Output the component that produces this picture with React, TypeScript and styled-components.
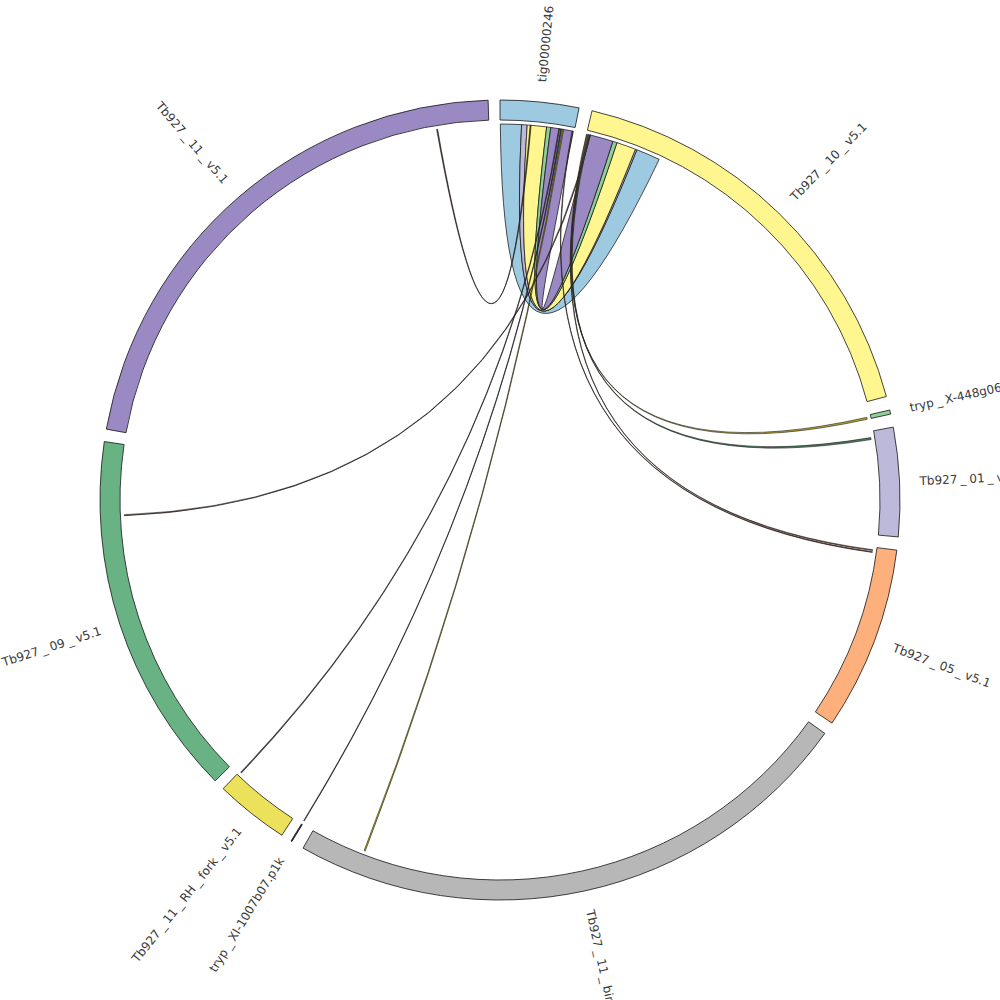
import React from "react";
import styled, { createGlobalStyle } from "styled-components";

const GlobalStyle = createGlobalStyle`
  html, body { margin: 0; padding: 0; background: #ffffff; }
  #root { width: 1000px; height: 1000px; }
`;

const Page = styled.div`
  width: 1000px;
  height: 1000px;
  background: #ffffff;
  overflow: hidden;
`;

const Canvas = styled.svg`
  display: block;
  width: 1000px;
  height: 1000px;
  overflow: hidden;
`;

const SegmentPath = styled.path<{ $fill: string }>`
  fill: ${(p) => p.$fill};
  stroke: #151515;
  stroke-width: 0.8;
  stroke-linejoin: miter;
`;

const RibbonPath = styled.path<{ $fill: string }>`
  fill: ${(p) => p.$fill};
  stroke: #151515;
  stroke-width: 0.75;
  stroke-linejoin: round;
`;

const LinkPath = styled.path<{ $fill: string }>`
  fill: ${(p) => p.$fill};
  stroke: #1a1a1a;
  stroke-width: 0.6;
  stroke-linejoin: round;
`;

const Label = styled.text`
  font-family: "DejaVu Sans", Verdana, sans-serif;
  font-size: 12px;
  fill: #3a3a3a;
`;

const CX = 500;
const CY = 500;
const R_IN = 380;
const R_OUT = 400;
const R_CHORD = 376;
const R_LABEL = 420;

const rad = (a: number) => (a * Math.PI) / 180;
const pt = (a: number, r: number): [number, number] => [
  CX + r * Math.sin(rad(a)),
  CY - r * Math.cos(rad(a)),
];
const f = (p: [number, number]) => `${p[0].toFixed(2)} ${p[1].toFixed(2)}`;

function segmentPath(a0: number, a1: number) {
  const large = a1 - a0 > 180 ? 1 : 0;
  return [
    `M ${f(pt(a0, R_OUT))}`,
    `A ${R_OUT} ${R_OUT} 0 ${large} 1 ${f(pt(a1, R_OUT))}`,
    `L ${f(pt(a1, R_IN))}`,
    `A ${R_IN} ${R_IN} 0 ${large} 0 ${f(pt(a0, R_IN))}`,
    "Z",
  ].join(" ");
}

function chordPath(
  a0: number,
  a1: number,
  b0: number,
  b1: number,
  cr: number
) {
  const am = (a0 + a1) / 2;
  const bm = (b0 + b1) / 2;
  const d = ((((bm - am) % 360) + 540) % 360) - 180;
  const mid = am + d / 2;
  const c = pt(mid, cr);
  const r = R_CHORD;
  return [
    `M ${f(pt(a0, r))}`,
    `A ${r} ${r} 0 0 1 ${f(pt(a1, r))}`,
    `Q ${f(c)} ${f(pt(b0, r))}`,
    `A ${r} ${r} 0 0 1 ${f(pt(b1, r))}`,
    `Q ${f(c)} ${f(pt(a0, r))}`,
    "Z",
  ].join(" ");
}

type Segment = { name: string; a0: number; a1: number; color: string };

const segments: Segment[] = [
  { name: "tig00000246", a0: 0, a1: 11.4, color: "#9ecae1" },
  { name: "Tb927_10_v5.1", a0: 13.3, a1: 75.0, color: "#fff68f" },
  { name: "tryp_X-448g06.p1k", a0: 77.0, a1: 77.6, color: "#8fcf98" },
  { name: "Tb927_01_v5.1", a0: 79.5, a1: 95.3, color: "#bcb9da" },
  { name: "Tb927_05_v5.1", a0: 97.2, a1: 123.9, color: "#fdb07b" },
  { name: "Tb927_11_bin_v5.1", a0: 125.7, a1: 209.5, color: "#b7b7b7" },
  { name: "tryp_XI-1007b07.p1k", a0: 211.35, a1: 211.5, color: "#2a2a3a" },
  { name: "Tb927_11_RH_fork_v5.1", a0: 213.05, a1: 223.8, color: "#ece15a" },
  { name: "Tb927_09_v5.1", a0: 225.4, a1: 278.4, color: "#69b283" },
  { name: "Tb927_11_v5.1", a0: 280.2, a1: 358.3, color: "#9a89c2" },
];

type Chord = {
  a: [number, number];
  b: [number, number];
  color: string;
  cr: number;
};

const ribbons: Chord[] = [
  { a: [0.05, 3.3], b: [21.35, 25.05], color: "#9ecae1", cr: 16 },
  { a: [3.3, 4.15], b: [21.1, 21.35], color: "#bcb9da", cr: 16 },
  { a: [4.15, 7.13], b: [18.12, 21.1], color: "#fff68f", cr: 16 },
  { a: [7.13, 7.76], b: [17.46, 18.12], color: "#8fcf98", cr: 16 },
  { a: [7.76, 11.25], b: [13.85, 17.46], color: "#9a89c2", cr: 16 },
];

const links: Chord[] = [
  { a: [350.3, 350.45], b: [4.6, 4.75], color: "#5a3a2a", cr: 20 },
  { a: [267.6, 267.75], b: [13.8, 13.95], color: "#6a4a3a", cr: 0 },
  { a: [223.45, 223.6], b: [9.0, 9.12], color: "#4a4a4a", cr: 0 },
  { a: [211.38, 211.48], b: [9.3, 9.42], color: "#3a3a4a", cr: 0 },
  { a: [201.0, 201.18], b: [9.6, 9.75], color: "#c9b800", cr: 0 },
  { a: [13.5, 13.62], b: [77.3, 77.6], color: "#b8a838", cr: 0 },
  { a: [13.64, 13.78], b: [80.45, 80.75], color: "#4c7c5c", cr: 0 },
  { a: [13.3, 13.42], b: [97.6, 97.72], color: "#a0522d", cr: 0 },
  { a: [11.05, 11.15], b: [97.9, 98.02], color: "#8b4a2b", cr: 0 },
];

function LabelText({ name, angle }: { name: string; angle: number }) {
  const flip = angle > 180;
  const transform = `translate(${CX},${CY}) rotate(${(angle - 90).toFixed(
    2
  )}) translate(${R_LABEL},0)${flip ? " rotate(180)" : ""}`;
  const parts = name.split("_");
  return (
    <Label
      transform={transform}
      textAnchor={flip ? "end" : "start"}
      dy="0.35em"
    >
      {parts.map((part, i) =>
        i === 0 ? (
          <tspan key={i}>{part}</tspan>
        ) : (
          <React.Fragment key={i}>
            <tspan dx="3">_</tspan>
            <tspan dx="3">{part}</tspan>
          </React.Fragment>
        )
      )}
    </Label>
  );
}

export default function App() {
  return (
    <Page>
      <GlobalStyle />
      <Canvas viewBox="0 0 1000 1000" xmlns="http://www.w3.org/2000/svg">
        <g>
          {segments.map((s) => (
            <SegmentPath
              key={s.name}
              d={segmentPath(s.a0, s.a1)}
              $fill={s.color}
            />
          ))}
        </g>
        <g>
          {ribbons.map((c, i) => (
            <RibbonPath
              key={i}
              d={chordPath(c.a[0], c.a[1], c.b[0], c.b[1], c.cr)}
              $fill={c.color}
            />
          ))}
        </g>
        <g>
          {links.map((c, i) => (
            <LinkPath
              key={i}
              d={chordPath(c.a[0], c.a[1], c.b[0], c.b[1], c.cr)}
              $fill={c.color}
            />
          ))}
        </g>
        <g>
          {segments.map((s) => (
            <LabelText
              key={s.name}
              name={s.name}
              angle={(s.a0 + s.a1) / 2}
            />
          ))}
        </g>
      </Canvas>
    </Page>
  );
}
